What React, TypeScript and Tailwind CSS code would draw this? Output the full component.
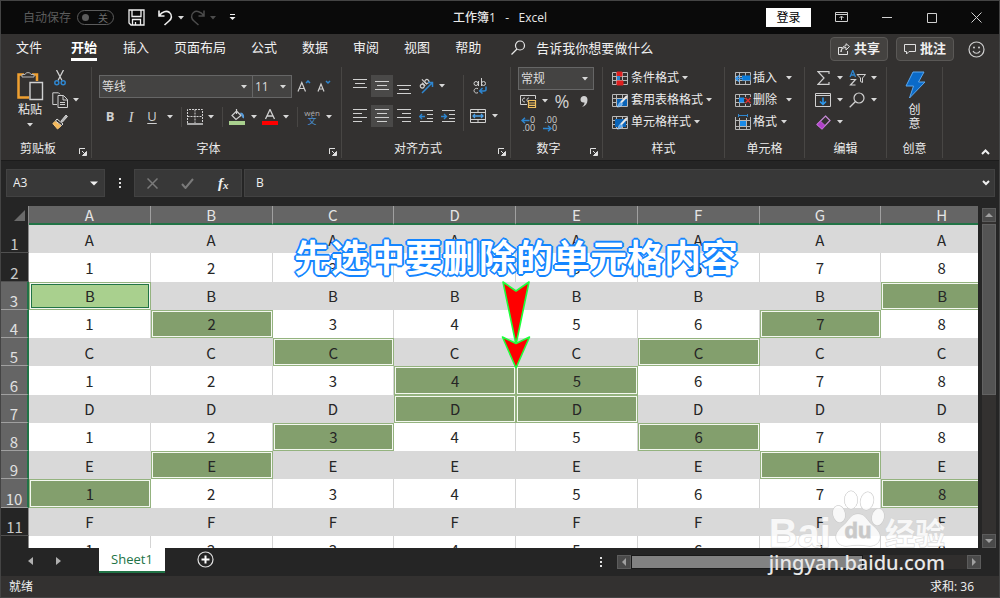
import type { ReactNode } from 'react';
import { clsx } from 'clsx';

const tabs = ['文件', '开始', '插入', '页面布局', '公式', '数据', '审阅', '视图', '帮助'];
const columns = ['A', 'B', 'C', 'D', 'E', 'F', 'G', 'H'];
const numbers = ['1', '2', '3', '4', '5', '6', '7', '8'];
const letters = ['A', 'B', 'C', 'D', 'E', 'F'];

// odd rows repeat a letter, even rows count 1-8
const rows = Array.from({ length: 12 }, (_, i) =>
  i % 2 === 0 ? columns.map(() => letters[i / 2]) : numbers
);

// row number -> selected column indexes
const selected: Record<number, number[]> = {
  3: [0, 7],
  4: [1, 6],
  5: [2, 5],
  6: [3, 4],
  7: [3, 4],
  8: [2, 5],
  9: [1, 6],
  10: [0, 7],
};

function Icon({ w = 16, h = 16, children }: { w?: number; h?: number; children: ReactNode }) {
  return (
    <svg width={w} height={h} viewBox={`0 0 ${w} ${h}`} fill="none" stroke="#d0d0d0" className="shrink-0" aria-hidden="true">
      {children}
    </svg>
  );
}

function Caret({ className }: { className?: string }) {
  return (
    <svg width="6" height="4" viewBox="0 0 6 4" className={clsx('shrink-0', className ?? 'fill-[#d8d8d8]')} aria-hidden="true">
      <path d="M0 0h6L3 3.6z" />
    </svg>
  );
}

function Tool({ label, className, children }: { label: string; className?: string; children: ReactNode }) {
  return (
    <button aria-label={label} className={clsx('flex h-[22px] shrink-0 items-center justify-center', className)}>
      {children}
    </button>
  );
}

function Drop({ label, className }: { label: string; className?: string }) {
  return (
    <button aria-label={label} className={clsx('flex h-[22px] w-[14px] shrink-0 items-center justify-center', className)}>
      <Caret />
    </button>
  );
}

function Sep() {
  return <div className="mx-1 h-5 w-px shrink-0 bg-[#484644]" />;
}

function Group({ label, launcher, className, children }: { label: string; launcher?: boolean; className: string; children: ReactNode }) {
  return (
    <section aria-label={label} className={clsx('flex shrink-0 flex-col border-r border-[#484644]', className)}>
      <div className="h-[73px]">{children}</div>
      <div className="flex h-[18px] items-center">
        <span className="flex-1 text-center leading-[18px]">{label}</span>
        {launcher && (
          <button aria-label={`${label}设置`} className="flex h-[18px] w-4 items-end justify-center pb-[2px]">
            <Icon w={8} h={8}>
              <path d="M.5 6V.5H6" stroke="#e0e0e0" />
              <path d="M3 3l3 3M7.5 3.5v4h-4z" stroke="#e0e0e0" fill="#e0e0e0" />
            </Icon>
          </button>
        )}
      </div>
    </section>
  );
}

function Lines({ spans, y = 1, step = 4 }: { spans: [number, number][]; y?: number; step?: number }) {
  return (
    <Icon w={14} h={16}>
      {spans.map(([a, b], i) => (
        <path key={i} d={`M${a} ${y + i * step + 0.5}H${b}`} />
      ))}
    </Icon>
  );
}

function TableGrid({ children }: { children: ReactNode }) {
  return (
    <Icon w={16} h={15}>
      <path d="M.5 1.5h15v12H.5zM4.5 1.5v12M10.5 1.5v12M.5 5.5h15M.5 9.5h15" stroke="#b8b8b8" />
      {children}
    </Icon>
  );
}

function TitleBar() {
  return (
    <header className="grid h-[34px] shrink-0 grid-cols-[1fr_auto_1fr] items-center border-t border-[#444] bg-[#0a0a0a]">
      <div className="flex items-center pl-[22px]">
        <span className="text-[#5c5c5c]">自动保存</span>
        <button role="switch" aria-checked="false" className="ml-[6px] flex h-[15px] w-[37px] items-center justify-between rounded-full border border-[#5c5c5c] pr-[5px] pl-1 text-[10px] leading-none text-[#6c6c6c]">
          <span className="h-[7px] w-[7px] rounded-full bg-[#5c5c5c]" />关
        </button>
        <Tool label="保存" className="ml-[13px] w-[18px]">
          <Icon w={17} h={17}>
            <path d="M1 1h15v15H3l-2-2zM4 1v6.500h9V1M4.500 16v-5.500h8V16M7.500 13v3" stroke="#f0f0f0" strokeWidth="1.3" />
          </Icon>
        </Tool>
        <Tool label="撤消" className="ml-[11px] w-[18px]">
          <Icon w={17} h={17}>
            <path d="M2 1.500V7h5.500M2.300 6.700C5 2.500 9.500 1.200 12.500 3.500c3.300 2.800 2 6.500-.500 8.500L7.500 16" stroke="#f0f0f0" strokeWidth="1.600" />
          </Icon>
        </Tool>
        <Drop label="撤消列表" />
        <Tool label="恢复" className="w-[18px]">
          <Icon w={17} h={17}>
            <path d="M15 1.500V7H9.500M14.700 6.700C12 2.500 7.500 1.200 4.500 3.500c-3.300 2.800-2 6.500.500 8.500l4.500 4" stroke="#4c4c4c" strokeWidth="1.500" />
          </Icon>
        </Tool>
        <button aria-label="恢复列表" className="flex w-[14px] justify-center">
          <Caret className="fill-[#4c4c4c]" />
        </button>
        <Tool label="自定义快速访问工具栏" className="ml-1 w-4">
          <Icon w={7} h={7}>
            <path d="M1 .5h5" stroke="#f0f0f0" />
            <path d="M.500 3h6L3.500 6z" fill="#f0f0f0" stroke="none" />
          </Icon>
        </Tool>
      </div>
      <h1 className="whitespace-pre font-medium text-[#e8e8e8]">工作簿1   -   Excel</h1>
      <div className="flex items-center justify-end">
        <button className="h-[19px] w-[45px] bg-white text-center leading-[18px] text-black">登录</button>
        <Tool label="功能区显示选项" className="ml-2 w-[45px]">
          <Icon w={13} h={11}>
            <path d="M.5.5h12v9H.5zM.5 2.500h12M6.500 8V4.500M4.500 6l2-2 2 2" />
          </Icon>
        </Tool>
        <Tool label="最小化" className="w-[45px]">
          <Icon w={10} h={10}><path d="M0 4.500h10" /></Icon>
        </Tool>
        <Tool label="最大化" className="w-[45px]">
          <Icon w={10} h={10}><path d="M.5.5h9v9h-9z" /></Icon>
        </Tool>
        <Tool label="关闭" className="w-[45px]">
          <Icon w={11} h={11}><path d="M.5.5l10 10M10.500.5l-10 10" /></Icon>
        </Tool>
      </div>
    </header>
  );
}

function TabBar() {
  return (
    <div className="flex h-[33px] shrink-0 items-start text-[13px] text-[#f0f0f0]">
      <nav className="flex gap-[25px] pl-[15px]">
        {tabs.map((tab) => (
          <a
            key={tab}
            href="#"
            className={clsx(
              'h-[27px] leading-[27px]',
              tab === '开始' && 'mr-px ml-1 border-b-3 border-white font-bold text-white'
            )}
          >
            {tab}
          </a>
        ))}
      </nav>
      <label className="ml-[30px] flex items-center gap-[10px]">
        <Icon w={15} h={15}>
          <circle cx="9" cy="5.500" r="4.500" stroke="#e8e8e8" strokeWidth="1.200" />
          <path d="M6 9l-5.500 5.500" stroke="#e8e8e8" strokeWidth="1.200" />
        </Icon>
        <input placeholder="告诉我你想要做什么" className="h-[27px] w-[150px] bg-transparent outline-none placeholder:text-[#f0f0f0] placeholder:opacity-100" />
      </label>
      <div className="ml-auto flex items-center gap-2 pt-[3px] pr-3">
        <button className="flex h-6 w-[58px] items-center justify-center gap-1 rounded-sm border border-[#5a5856] bg-[#444240] font-bold">
          <Icon w={12} h={12}>
            <path d="M4 4.500H.5v7h9V8M3 9c0-3 2-4.500 5-4.500V7l3.500-3.500L8 .7v2C5.500 3 3 5 3 9z" stroke="#e0e0e0" />
          </Icon>
          共享
        </button>
        <button className="flex h-6 w-[58px] items-center justify-center gap-1 rounded-sm border border-[#5a5856] bg-[#444240] font-bold">
          <Icon w={12} h={11}>
            <path d="M.5.5h11v7H5L2.500 10V7.500h-2z" stroke="#e0e0e0" />
          </Icon>
          批注
        </button>
        <Tool label="反馈" className="ml-[3px] w-[22px]">
          <Icon w={17} h={17}>
            <circle cx="8.500" cy="8.500" r="7.500" strokeWidth="1.200" />
            <path d="M5 10c1.500 3 5.500 3 7 0" strokeWidth="1.200" />
            <circle cx="6" cy="6.500" r="1" fill="#d0d0d0" stroke="none" />
            <circle cx="11" cy="6.500" r="1" fill="#d0d0d0" stroke="none" />
          </Icon>
        </Tool>
      </div>
    </div>
  );
}

function Select({ label, value, className }: { label: string; value: string; className: string }) {
  return (
    <div className={clsx('flex h-[23px] items-center border border-[#666] bg-[#444342] pr-[5px]', className)}>
      <select aria-label={label} className="h-full min-w-0 flex-1 appearance-none bg-transparent pl-[2px] text-[#dcdcdc] outline-none">
        <option>{value}</option>
      </select>
      <Caret />
    </div>
  );
}

function ClipboardGroup() {
  return (
    <Group label="剪贴板" launcher className="w-[91px]">
      <div className="flex pl-[13px]">
        <button className="flex w-[32px] flex-col items-center pt-1">
          <Icon w={28} h={30}>
            <path d="M8 3.500H2.500v23H13M16 3.500h5V10" stroke="#f0a030" strokeWidth="2.500" />
            <path d="M6 6V3.500h3C9.500 1 14.500 1 15 3.500h3V6z" fill="#333130" stroke="#b8b8b8" />
            <path d="M14 11.500h12.500v17H14z" fill="#333130" stroke="#d0d0d0" strokeWidth="1.400" />
          </Icon>
          <span className="leading-[18px]">粘贴</span>
          <Caret className="mt-1 fill-[#d8d8d8]" />
        </button>
        <div className="ml-[5px] flex flex-col">
          <Tool label="剪切" className="w-[18px]">
            <Icon w={12} h={16}>
              <path d="M2.500 0l5.500 10.500M9.500 0L4 10.500" strokeWidth="1.300" />
              <circle cx="2.800" cy="12.800" r="2" stroke="#2e86d0" strokeWidth="1.500" />
              <circle cx="9.200" cy="12.800" r="2" stroke="#2e86d0" strokeWidth="1.500" />
            </Icon>
          </Tool>
          <div className="flex">
            <Tool label="复制" className="w-[18px]">
              <Icon w={17} h={16}>
                <path d="M5 12.500H.8V.8h5.700l1.500 1.500" />
                <path d="M6 3.500h5.500l4 4v8H6zM11 3.500v4.500h4.500M8 10.500h5M8 12.500h5" />
              </Icon>
            </Tool>
            <Drop label="复制选项" />
          </div>
          <Tool label="格式刷" className="w-[18px]">
            <Icon w={16} h={16}>
              <path d="M9 7l5-6 1.500 1.500L10.500 8z" fill="#b8b8b8" />
              <path d="M5 5l6 5-1.500 1.500-6-4.500z" stroke="#e0e0e0" fill="#333130" />
              <path d="M3 7.500l6 4.500-3.500 3L.8 9.500z" fill="#f5b95a" stroke="#f5c47a" />
            </Icon>
          </Tool>
        </div>
      </div>
    </Group>
  );
}

function FontGroup() {
  return (
    <Group label="字体" launcher className="w-[250px]">
      <div className="flex flex-col gap-2 pt-2 pl-[7px]">
        <div className="flex items-center">
          <Select label="字体" value="等线" className="w-[154px]" />
          <Select label="字号" value="11" className="w-[39px] border-l-0" />
          <Tool label="增大字号" className="ml-[2px] w-5">
            <Icon w={14} h={14}>
              <path d="M1 11.500L4.800 2.500 8.500 11.500M2.300 8.500h5" strokeWidth="1.200" />
              <path d="M9 3l2-2 2 2" stroke="#2e86d0" strokeWidth="1.500" />
            </Icon>
          </Tool>
          <Tool label="减小字号" className="w-5">
            <Icon w={14} h={14}>
              <path d="M1 11.500L4 4l3 7.500M2.300 9h3.500" strokeWidth="1.200" />
              <path d="M9 1l2 2 2-2" stroke="#2e86d0" strokeWidth="1.500" />
            </Icon>
          </Tool>
        </div>
        <div className="flex items-center">
          <Tool label="加粗" className="w-[22px] text-[13px] font-bold text-[#d0d0d0]">B</Tool>
          <Tool label="倾斜" className="w-5 font-['Liberation_Serif',serif] text-[15px] italic text-[#d0d0d0]">I</Tool>
          <Tool label="下划线" className="w-[22px] text-[13px] text-[#d0d0d0] underline underline-offset-2">U</Tool>
          <Drop label="下划线选项" />
          <Sep />
          <Tool label="边框" className="w-[18px]">
            <Icon w={16} h={16}>
              <path d="M.5 14V.5h15V14M.5 7.500h15M8 .5V14" strokeDasharray="2 1" />
              <path d="M0 15h16" strokeWidth="1.500" />
            </Icon>
          </Tool>
          <Drop label="边框选项" />
          <Sep />
          <Tool label="填充颜色" className="w-5">
            <Icon w={16} h={16}>
              <path d="M0 14h16" stroke="#a9d08e" strokeWidth="4" />
              <path d="M7.500 2L12 6.500 7 10.500 3 6.500zM7.500 5V0" strokeWidth="1.200" />
              <path d="M11.500 4c2.500 0 3.500 2 3 5-1.200-.500-1.500-2-1.500-3z" fill="#5aa0e0" stroke="#5aa0e0" />
            </Icon>
          </Tool>
          <Drop label="填充颜色选项" />
          <Tool label="字体颜色" className="w-[18px]">
            <Icon w={16} h={16}>
              <path d="M0 14h16" stroke="#ff0000" strokeWidth="4" />
              <path d="M3.500 10L8 .5 12.500 10M5 7h6" strokeWidth="1.300" />
            </Icon>
          </Tool>
          <Drop label="字体颜色选项" />
          <Sep />
          <Tool label="拼音" className="w-5 flex-col">
            <span className="text-[8px] leading-2 text-[#b0b0b0]">wén</span>
            <span className="text-[9px] leading-2 text-[#4a90d0]">文</span>
          </Tool>
          <Drop label="拼音选项" />
        </div>
      </div>
    </Group>
  );
}

function AlignGroup() {
  return (
    <Group label="对齐方式" launcher className="w-[169px]">
      <div className="flex pt-2 pl-[7px]">
        <div className="flex w-[110px] flex-col gap-2">
          <div className="flex">
            <Tool label="顶端对齐" className="w-[22px]"><Lines spans={[[0, 14], [2, 12], [0, 14]]} y={1} /></Tool>
            <Tool label="垂直居中" className="w-[22px] bg-[#4a4948]"><Lines spans={[[0, 14], [2, 12], [0, 14]]} y={3} /></Tool>
            <Tool label="底端对齐" className="w-[22px]"><Lines spans={[[0, 14], [2, 12], [0, 14]]} y={7} /></Tool>
            <Tool label="方向" className="w-[20px]">
              <Icon w={17} h={16}>
                <g transform="rotate(-45 6 6)">
                  <circle cx="4" cy="7" r="2" strokeWidth="1.200" />
                  <path d="M6.300 4.500V9M8.500 2v7" strokeWidth="1.200" />
                  <circle cx="10.500" cy="7" r="2" strokeWidth="1.200" />
                </g>
                <path d="M5 15L15 5M11 4.500h4.500V9" stroke="#2e86d0" strokeWidth="1.500" />
              </Icon>
            </Tool>
            <Drop label="方向选项" />
          </div>
          <div className="flex">
            <Tool label="左对齐" className="w-[22px]"><Lines spans={[[0, 14], [0, 9], [0, 14], [0, 9]]} /></Tool>
            <Tool label="居中" className="w-[22px] bg-[#4a4948]"><Lines spans={[[0, 14], [2, 12], [0, 14], [2, 12]]} /></Tool>
            <Tool label="右对齐" className="w-[22px]"><Lines spans={[[0, 14], [5, 14], [0, 14], [5, 14]]} /></Tool>
            <Tool label="减少缩进量" className="w-[22px]">
              <Icon w={14} h={14}>
                <path d="M1 1.500h13M8 5.500h6M8 9.500h6M1 12.500h13" />
                <path d="M.500 7.500H6M3 5L.700 7.500 3 10" stroke="#2e86d0" strokeWidth="1.400" />
              </Icon>
            </Tool>
            <Tool label="增加缩进量" className="w-[22px]">
              <Icon w={14} h={14}>
                <path d="M1 1.500h13M8 5.500h6M8 9.500h6M1 12.500h13" />
                <path d="M0 7.500h5.500M3 5l2.500 2.500L3 10" stroke="#2e86d0" strokeWidth="1.400" />
              </Icon>
            </Tool>
          </div>
        </div>
        <div className="mx-1 h-[56px] w-px bg-[#484644]" />
        <div className="flex flex-col gap-2">
          <Tool label="自动换行" className="w-6">
            <Icon w={14} h={16}>
              <circle cx="3" cy="5.500" r="2" />
              <path d="M5.500 3v5M8.500 0v8M5 10.700c-2-1-4 .3-4 2s2 3 4 2" />
              <circle cx="10.500" cy="5.500" r="2" />
              <path d="M13 8.500v3c0 1-.500 1.500-2 1.500H7M9.500 10L6.700 13l2.800 2.500" stroke="#2e86d0" strokeWidth="1.500" />
            </Icon>
          </Tool>
          <div className="flex">
            <Tool label="合并后居中" className="w-5">
              <Icon w={16} h={15}>
                <path d="M.5.5h15v13H.5zM.5 3.500h15M.5 10.500h15M8 .5v3M8 10.500v3" />
                <path d="M3 7h10M5 5L3 7l2 2M11 5l2 2-2 2" stroke="#4aa0e8" strokeWidth="1.300" />
              </Icon>
            </Tool>
            <Drop label="合并选项" />
          </div>
        </div>
      </div>
    </Group>
  );
}

function NumberGroup() {
  return (
    <Group label="数字" launcher className="w-[92px]">
      <div className="flex flex-col pl-[7px]">
        <Select label="数字格式" value="常规" className="w-[76px]" />
        <div className="flex items-center">
          <Tool label="会计数字格式" className="w-5">
            <Icon w={17} h={15}>
              <path d="M7 10.500H.5v-9h15V5M5 4c-2 0-2.500 1-2.500 2S3 8 5 8M9 8C7.500 8 7 7 7 6s.500-2 2-2" />
              <path d="M8.500 6.500h7v7h-7zM8.500 9h7M8.500 11.300h7" fill="#333130" stroke="#f0c060" strokeWidth="1.200" />
            </Icon>
          </Tool>
          <Drop label="会计格式选项" />
          <Tool label="百分比" className="w-5 text-[18px] text-[#d0d0d0]">%</Tool>
          <Tool label="千位分隔" className="w-6">
            <Icon w={8} h={13}>
              <path d="M4 1c2.200 0 3.500 1.500 3.500 4 0 3.500-2 6-5.500 7 1.500-1.500 2.500-2.500 2.500-4.500C2 8 .5 6.500.5 4.500.5 2.500 2 1 4 1z" fill="#d0d0d0" stroke="none" />
            </Icon>
          </Tool>
        </div>
        <div className="flex h-6 items-center gap-[2px]">
          <Tool label="增加小数位数" className="w-5">
            <span className="flex flex-col items-end text-[9px] leading-2 text-[#d0d0d0]">
              <span className="flex items-center">
                <Icon w={9} h={7}><path d="M1 3.500h7.500M4 .7L1 3.500l3 2.800" stroke="#2e86d0" strokeWidth="1.400" /></Icon>0
              </span>
              <span>.00</span>
            </span>
          </Tool>
          <Tool label="减少小数位数" className="w-5">
            <span className="flex flex-col items-end text-[9px] leading-2 text-[#d0d0d0]">
              <span>.00</span>
              <span className="flex items-center">
                <Icon w={9} h={7}><path d="M0 3.500h7.500M5 .7l3 2.800-3 2.800" stroke="#2e86d0" strokeWidth="1.400" /></Icon>0
              </span>
            </span>
          </Tool>
        </div>
      </div>
    </Group>
  );
}

function StyleGroup() {
  return (
    <Group label="样式" className="w-[122px]">
      <div className="flex flex-col items-start pl-[9px]">
        <button className="flex h-[22px] items-center gap-[3px]">
          <TableGrid>
            <path d="M5 1h5v4H5zM5 10h6v4H5z" fill="#e02020" stroke="#e02020" />
            <path d="M5 5h3v4H5z" fill="#2e86d0" stroke="none" />
          </TableGrid>
          条件格式<Caret />
        </button>
        <button className="flex h-[22px] items-center gap-[3px]">
          <TableGrid>
            <path d="M5 6h10v7H5z" fill="#0a64b8" stroke="none" />
            <path d="M15 3L9 9.500" stroke="#e8e8e8" strokeWidth="2" />
            <path d="M8.500 9l2 2c-1 2.500-3 3-5.500 3 1.500-1 1.500-3.500 3.500-5z" fill="#5aa8f0" stroke="#d0e4f8" strokeWidth=".6" />
          </TableGrid>
          套用表格格式<Caret />
        </button>
        <button className="flex h-[22px] items-center gap-[3px]">
          <TableGrid>
            <path d="M3 4h11v8H3z" fill="#0a64b8" stroke="none" />
            <path d="M15 3L9 9.500" stroke="#e8e8e8" strokeWidth="2" />
            <path d="M8.500 9l2 2c-1 2.500-3 3-5.500 3 1.500-1 1.500-3.500 3.500-5z" fill="#5aa8f0" stroke="#d0e4f8" strokeWidth=".6" />
          </TableGrid>
          单元格样式<Caret />
        </button>
      </div>
    </Group>
  );
}

function CellsGroup() {
  return (
    <Group label="单元格" className="w-[80px]">
      <div className="flex flex-col items-start pl-[10px]">
        <div className="flex h-[22px] items-center">
          <button className="flex items-center gap-[2px]">
            <TableGrid>
              <path d="M7 4.500h8.500v5H7z" fill="#0a7ad8" stroke="none" />
              <path d="M1 7.500h7M4 4.500l-3 3 3 3" stroke="#3a9af0" strokeWidth="1.500" />
            </TableGrid>
            插入
          </button>
          <Drop label="插入选项" className="ml-[5px]" />
        </div>
        <div className="flex h-[22px] items-center">
          <button className="flex items-center gap-[2px]">
            <TableGrid>
              <path d="M4 4.500h5v5H4z" fill="#1a8ae8" stroke="none" />
              <path d="M9.500 4h7v7h-7z" fill="#333130" stroke="none" />
              <path d="M10.500 5l5 5M15.500 5l-5 5" stroke="#e03030" strokeWidth="1.500" />
            </TableGrid>
            删除
          </button>
          <Drop label="删除选项" className="ml-[5px]" />
        </div>
        <button className="flex h-[22px] items-center gap-[2px]">
          <Icon w={16} h={16}>
            <path d="M.5 3v12.500h15V3M.5 6.500h15M.5 12.500h15M4.500 4v11.500M11.500 4v11.500" stroke="#b8b8b8" />
            <path d="M5 7h6v5H5z" fill="#1a8ae8" stroke="none" />
            <path d="M3.500 1.500h9M3.500 0v3M12.500 0v3" stroke="#2e86d0" />
          </Icon>
          格式<Caret className="ml-[2px] fill-[#d8d8d8]" />
        </button>
      </div>
    </Group>
  );
}

function EditGroup() {
  return (
    <Group label="编辑" className="w-[82px]">
      <div className="flex flex-col pl-2">
        <div className="flex">
          <Tool label="自动求和" className="w-5">
            <Icon w={13} h={14}>
              <path d="M12 3V.7H1L7 7l-6 6.300h11V11" strokeWidth="1.200" />
            </Icon>
          </Tool>
          <Drop label="求和选项" />
          <Tool label="排序和筛选" className="w-5">
            <Icon w={17} h={16}>
              <path d="M1 7L3.800.5 6.500 7M2 5h3.600" stroke="#2e86d0" strokeWidth="1.300" />
              <path d="M1.500 9.500h5L1.500 15h5" strokeWidth="1.200" />
              <path d="M8 4.500h8.500L13.500 8v4.500l-2-1V8z" />
            </Icon>
          </Tool>
          <Drop label="排序选项" />
        </div>
        <div className="flex">
          <Tool label="填充" className="w-5">
            <Icon w={16} h={14}>
              <path d="M.5.5h15v13H.5zM.5 2.500h15" />
              <path d="M8 4.500v7M5 8.500l3 3 3-3" stroke="#2e9af0" strokeWidth="1.500" />
            </Icon>
          </Tool>
          <Drop label="填充选项" />
          <Tool label="查找和选择" className="w-5">
            <Icon w={16} h={16}>
              <circle cx="10" cy="6" r="5" strokeWidth="1.200" />
              <path d="M6.500 9.500L.7 15.300" strokeWidth="1.300" />
            </Icon>
          </Tool>
          <Drop label="查找选项" />
        </div>
        <div className="flex">
          <Tool label="清除" className="w-5">
            <Icon w={15} h={15}>
              <path d="M9.500 1L14 5.500 6 14 1 9.500z" stroke="#c88ad8" strokeWidth="1.200" />
              <path d="M4.500 6.200L9 10.500 6 14 1 9.500z" fill="#b040c8" stroke="#c060d8" />
            </Icon>
          </Tool>
          <Drop label="清除选项" />
        </div>
      </div>
    </Group>
  );
}

function Ribbon() {
  return (
    <div className="flex h-[93px] shrink-0 items-start text-[#ececec]">
      <ClipboardGroup />
      <FontGroup />
      <AlignGroup />
      <NumberGroup />
      <StyleGroup />
      <CellsGroup />
      <EditGroup />
      <Group label="创意" className="w-[56px]">
        <button className="flex w-full flex-col items-center pt-1">
          <Icon w={22} h={28}>
            <path d="M9 1h11l-5.500 10H21L5.500 27l4-12H2z" fill="#0a6ac8" stroke="#5aa8f0" />
          </Icon>
          <span className="mt-1 w-3 leading-[14px]">创意</span>
        </button>
      </Group>
      <button aria-label="折叠功能区" className="mt-auto mr-[9px] mb-[5px] ml-auto">
        <Icon w={9} h={6}><path d="M1 5l3.500-3.500L8 5" stroke="#f0f0f0" strokeWidth="2" /></Icon>
      </button>
    </div>
  );
}

function FormulaBar() {
  return (
    <div className="flex h-[46px] shrink-0 items-start border-t border-[#1c1c1c] bg-[#252525] pt-2 pr-1 pl-[5px] text-[#f0f0f0]">
      <div className="flex h-7 w-[99px] items-center border border-[#424242] bg-[#383838] pr-[6px] pl-[6px]">
        <input aria-label="名称框" defaultValue="A3" className="min-w-0 flex-1 bg-transparent outline-none" />
        <Icon w={8} h={5}><path d="M0 .5h8L4 4.500z" fill="#f0f0f0" stroke="none" /></Icon>
      </div>
      <div className="flex h-7 w-[29px] flex-col items-center justify-center gap-[2px]">
        <i className="h-[2px] w-[2px] bg-[#e0e0e0]" />
        <i className="h-[2px] w-[2px] bg-[#e0e0e0]" />
        <i className="h-[2px] w-[2px] bg-[#e0e0e0]" />
      </div>
      <div className="flex h-7 w-[108px] items-center justify-around border border-[#424242] bg-[#383838]">
        <Tool label="取消" className="w-6">
          <Icon w={11} h={11}><path d="M.5.5l10 10M10.500.5l-10 10" stroke="#7a7a7a" strokeWidth="1.500" /></Icon>
        </Tool>
        <Tool label="输入" className="w-6">
          <Icon w={13} h={11}><path d="M1 6l3.500 4L12 1" stroke="#7a7a7a" strokeWidth="2" /></Icon>
        </Tool>
        <Tool label="插入函数" className="w-6 font-['Liberation_Serif',serif] font-bold italic">
          <span className="text-[15px]">f</span>
          <span className="pt-1 text-[11px]">x</span>
        </Tool>
      </div>
      <div className="ml-[2px] flex h-7 flex-1 items-center border border-[#424242] bg-[#383838] pr-1 pl-[11px]">
        <input aria-label="编辑栏" defaultValue="B" className="min-w-0 flex-1 bg-transparent outline-none" />
        <Icon w={8} h={6}><path d="M1 1l3 3 3-3" stroke="#f0f0f0" strokeWidth="2" /></Icon>
      </div>
    </div>
  );
}

function Sheet() {
  return (
    <div className="min-w-0 flex-1 overflow-hidden bg-[#252525]">
      <table className="h-[358px] w-[1002px] table-fixed border-separate border-spacing-0 text-center font-['Noto_Sans_CJK_SC',sans-serif] text-[15px] leading-5 text-[#262626]">
        <thead>
          <tr className="h-[19px]">
            <th className="w-[28px] border-r border-[#8a8a8a] p-0">
              <div className="flex justify-end pr-[3px]">
                <Icon w={11} h={11}><path d="M11 0v11H0z" fill="#6a6a6a" stroke="none" /></Icon>
              </div>
            </th>
            {columns.map((c) => (
              <th key={c} scope="col" className="h-[19px] border-r border-b-2 border-r-[#a0a0a0] border-b-[#217346] bg-[#656565] p-0 leading-4 font-normal text-[#e4e4e4]">
                {c}
              </th>
            ))}
          </tr>
        </thead>
        <tbody>
          {rows.map((row, r) => {
            const n = r + 1;
            const banded = r % 2 === 0;
            return (
              <tr key={n}>
                <th
                  scope="row"
                  className={clsx(
                    'border-b p-0 align-bottom leading-4 font-normal',
                    selected[n]
                      ? 'border-r-2 border-r-[#217346] border-b-[#a0a0a0] bg-[#656565] text-[#e0e0e0]'
                      : 'border-r border-r-[#8a8a8a] border-b-[#505050] bg-[#252525] text-[#c8c8c8]'
                  )}
                >
                  {n}
                </th>
                {row.map((value, c) => {
                  const isSelected = selected[n]?.includes(c);
                  const isActive = n === 3 && c === 0;
                  return (
                    <td
                      key={c}
                      className={clsx(
                        'p-0 pt-px',
                        !isSelected && (banded ? 'border-r border-[#d9d9d9] bg-[#d9d9d9]' : 'border-r border-[#d4d4d4] bg-white'),
                        isSelected && !isActive && 'bg-[#839f6d] shadow-[inset_0_0_0_1px_#94b37f,inset_0_0_0_2px_#f4f8f0]',
                        isActive && 'bg-[#a9d08e] shadow-[inset_0_0_0_1px_#94b37f,inset_0_0_0_2px_#f4f8f0,inset_0_0_0_3px_#217346]'
                      )}
                    >
                      {value}
                    </td>
                  );
                })}
              </tr>
            );
          })}
        </tbody>
      </table>
    </div>
  );
}

function ScrollButton({ label, d }: { label: string; d: string }) {
  return (
    <button aria-label={label} className="flex h-[14px] w-[14px] shrink-0 items-center justify-center border border-[#5c5c5c] bg-[#4a4a4a]">
      <Icon w={8} h={8}><path d={d} fill="#a0a0a0" stroke="none" /></Icon>
    </button>
  );
}

// caption and arrow drawn on top of the cells
function Callout() {
  return (
    <div className="pointer-events-none absolute top-[34px] left-[293px] flex flex-col items-center">
      <p className="text-[37px] leading-9 font-bold whitespace-nowrap text-white [text-shadow:2px_0_#1485ff,-2px_0_#1485ff,0_2px_#1485ff,0_-2px_#1485ff,1px_1px_#1485ff,-1px_-1px_#1485ff,1px_-1px_#1485ff,-1px_1px_#1485ff]">
        先选中要删除的单元格内容
      </p>
      <svg width="30" height="90" viewBox="0 0 30 90" className="mt-1" aria-hidden="true">
        <g fill="#ff0000" stroke="#1eff3c" strokeWidth="1.600" strokeLinejoin="round">
          <path d="M2 2l13 9L28 2 15.500 62h-1z" />
          <path d="M1.500 57L15 63.500 28.500 57 15 88z" />
        </g>
      </svg>
    </div>
  );
}

function Watermark() {
  return (
    <div className="pointer-events-none absolute right-[54px] bottom-[23px] flex flex-col items-start text-white/80">
      <div className="flex items-end font-bold [-webkit-text-stroke:1px_#d4d4d4] [paint-order:stroke_fill]">
        <span className="font-['Liberation_Sans',sans-serif] text-[40px] leading-9">Bai</span>
        <div className="relative mb-1">
          <svg width="54" height="58" viewBox="0 0 54 58" fill="#ffffff" fillOpacity=".8" stroke="#c8c8c8" aria-hidden="true">
            <ellipse cx="8" cy="25" rx="6" ry="8.500" transform="rotate(-12 8 25)" />
            <ellipse cx="20" cy="11" rx="6.500" ry="9" />
            <ellipse cx="36" cy="12" rx="6.500" ry="9" transform="rotate(12 36 12)" />
            <ellipse cx="47" cy="28" rx="6" ry="8.500" transform="rotate(12 47 28)" />
            <path d="M27 25c6 0 8 4 12 9 4 4 10 8 10 14 0 6-5 9-10 9-4 0-8-1-12-1s-8 1-12 1c-5 0-10-3-10-9 0-6 6-10 10-14 4-5 6-9 12-9z" />
          </svg>
          <span className="absolute inset-x-0 bottom-1 text-center font-['Liberation_Sans',sans-serif] text-[22px] leading-6 text-[#c9c9c9]">du</span>
        </div>
        <span className="text-[30px] leading-9">经验</span>
      </div>
      <span className="font-['Noto_Sans',sans-serif] text-[20px] leading-6 font-medium text-[#e8e8e8]">jingyan.baidu.com</span>
    </div>
  );
}

function SheetTabs() {
  return (
    <div className="flex h-7 shrink-0 items-start bg-[#252525]">
      <div className="flex w-[98px] items-center justify-center gap-5 pt-[2px] pr-3">
        <Tool label="上一个工作表" className="w-2"><Icon w={5} h={8}><path d="M5 0v8L0 4z" fill="#b0b0b0" stroke="none" /></Icon></Tool>
        <Tool label="下一个工作表" className="w-2"><Icon w={5} h={8}><path d="M0 0v8l5-4z" fill="#b0b0b0" stroke="none" /></Icon></Tool>
      </div>
      <button className="h-[25px] w-[66px] border-b-2 border-[#217346] bg-white text-[13px] leading-[23px] text-[#217346]">Sheet1</button>
      <Tool label="新工作表" className="ml-[31px] h-7 w-[18px]">
        <Icon w={17} h={17}>
          <circle cx="8.500" cy="8.500" r="7.500" stroke="#e0e0e0" strokeWidth="1.200" />
          <path d="M8.500 4.500v8M4.500 8.500h8" stroke="#ffffff" strokeWidth="2" />
        </Icon>
      </Tool>
      <div className="ml-auto flex h-7 flex-col justify-center gap-[2px] pr-[15px]">
        <i className="h-[2px] w-[2px] bg-[#e0e0e0]" />
        <i className="h-[2px] w-[2px] bg-[#e0e0e0]" />
        <i className="h-[2px] w-[2px] bg-[#e0e0e0]" />
      </div>
      <div className="mt-[7px] mr-[18px] flex w-[364px] bg-[#302e2d]">
        <ScrollButton label="向左滚动" d="M6 0v8L2 4z" />
        <div className="flex h-[14px] flex-1">
          <div className="w-[232px] border border-[#1a1a1a] bg-[#828282]" />
        </div>
        <ScrollButton label="向右滚动" d="M2 0v8l4-4z" />
      </div>
    </div>
  );
}

export default function App() {
  return (
    <div className="relative flex h-screen flex-col overflow-hidden border-r border-l border-[#444] bg-[#333130] font-['Open_Sans','Noto_Sans_CJK_SC',sans-serif] text-[12px]">
      <TitleBar />
      <TabBar />
      <Ribbon />
      <FormulaBar />
      <main className="relative flex min-h-0 flex-1 bg-[#252525]">
        <Sheet />
        <div className="mt-[2px] flex w-[21px] flex-col items-center bg-[#252525]">
          <ScrollButton label="向上滚动" d="M0 6h8L4 2z" />
          <div className="flex w-[14px] flex-1 flex-col bg-[#333130] pt-[2px]">
            <div className="h-[171px] border border-[#626262] bg-[#545454]" />
          </div>
          <ScrollButton label="向下滚动" d="M0 2h8L4 6z" />
        </div>
        <Callout />
      </main>
      <SheetTabs />
      <footer className="flex h-[22px] shrink-0 items-center justify-between border-b border-[#444] pr-[25px] pl-2 leading-5 text-[#f0f0f0]">
        <span>就绪</span>
        <span>求和: 36</span>
      </footer>
      <Watermark />
    </div>
  );
}
